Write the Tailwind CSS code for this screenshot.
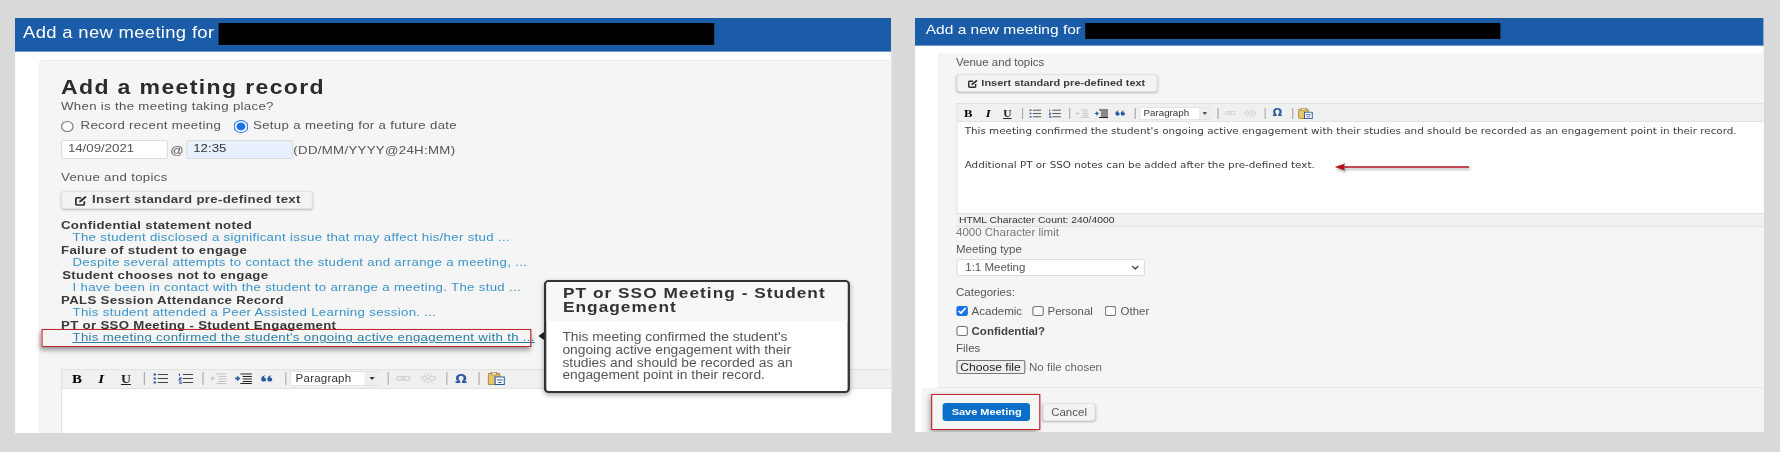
<!DOCTYPE html>
<html lang="en">
<head>
<meta charset="utf-8">
<title>Add a new meeting</title>
<script src="https://cdn.jsdelivr.net/npm/@tailwindcss/browser@4"></script>
</head>
<body class="m-0 bg-[#d9d9d9]">
<div class="w-[1780px] h-[452px] overflow-hidden flex items-start bg-[#d9d9d9] font-['Liberation_Sans',Arial,sans-serif] text-[#444] blur-[0.5px]">

  <!-- LEFT PANEL -->
  <section class="w-[876px] h-[415px] ml-[15px] mt-[18px] shrink-0">
    <div class="relative w-[761.74px] h-[415px] origin-top-left scale-x-[1.15] bg-white overflow-hidden tracking-[0.28px]">
      <header class="h-[34px] bg-[#1a5ca8] border-b border-[#6f9bd0] flex items-center pl-[7px] text-white">
        <h1 class="text-[16px] leading-[18px] tracking-[0.3px] w-[170px] shrink-0 whitespace-nowrap mb-[3px]">Add a new meeting for</h1>
        <div class="w-[430.5px] h-[22px] bg-black mb-[1px]"></div>
      </header>
      <div class="ml-[21px] mt-[8px] h-[373px] bg-[#f5f5f5] border-l border-t border-[#ececec] rounded-tl-[3px] pl-[18px] pt-[14px]">
        <h2 class="h-[24px] leading-[24px] text-[20px] tracking-[1.2px] font-bold text-[#2b2b2b] whitespace-nowrap">Add a meeting record</h2>
        <p class="h-[14px] leading-[14px] text-[11.5px] text-[#555]">When is the meeting taking place?</p>
        <div class="mt-[6px] h-[14px] flex items-center text-[11.5px] text-[#555] whitespace-nowrap">
          <input type="radio" name="when" class="w-[11px] h-[13px] m-0 accent-[#1a73e8]">
          <label class="ml-[6px] w-[133px]">Record recent meeting</label>
          <input type="radio" name="when" checked class="w-[13px] h-[13px] m-0 accent-[#1a73e8]">
          <label class="ml-[4px]">Setup a meeting for a future date</label>
        </div>
        <div class="mt-[7px] h-[19px] flex items-center text-[11.5px] text-[#555] whitespace-nowrap">
          <div class="w-[93px] h-[19px] bg-white border border-[#dcdcdc] rounded-[2px] pl-[5px] leading-[15px] tracking-normal">14/09/2021</div>
          <span class="w-[16px] text-center mt-[3px]">@</span>
          <div class="w-[93px] h-[19px] bg-[#e8f0fe] border border-[#dcdcdc] rounded-[2px] pl-[5px] leading-[15px] text-[#333] tracking-normal">12:35</div>
          <span class="mt-[2px]">(DD/MM/YYYY@24H:MM)</span>
        </div>
        <p class="mt-[11px] h-[14px] leading-[14px] text-[11.5px] text-[#555]">Venue and topics</p>
        <button class="mt-[7px] w-[219px] h-[18px] bg-[#f3f3f3] border border-[#e2e2e2] rounded-[3px] shadow-[0_1px_2px_rgba(0,0,0,0.25)] flex items-center pl-[11px] text-[11.5px] font-bold text-[#3c3c3c] whitespace-nowrap">
          <svg viewBox="0 0 12 12" class="w-[11px] h-[11px] shrink-0 mr-[4px]"><path d="M9 6.8V10a1 1 0 0 1-1 1H2a1 1 0 0 1-1-1V4a1 1 0 0 1 1-1h4" fill="none" stroke="#333" stroke-width="1.7"/><path d="M4 8.2 4.5 6 9.8 1 11.3 2.5 6 7.6z" fill="#333"/></svg>
          Insert standard pre-defined text
        </button>
        <ul class="mt-[9.8px] text-[11.5px] leading-[12.5px] whitespace-nowrap">
          <li class="font-bold text-[#3a3a3a]">Confidential statement noted</li>
          <li class="pl-[10px] text-[#3b94c9]">The student disclosed a significant issue that may affect his/her stud ...</li>
          <li class="font-bold text-[#3a3a3a]">Failure of student to engage</li>
          <li class="pl-[10px] text-[#3b94c9]">Despite several attempts to contact the student and arrange a meeting, ...</li>
          <li class="font-bold text-[#3a3a3a] pl-[1px]">Student chooses not to engage</li>
          <li class="pl-[10px] text-[#3b94c9]">I have been in contact with the student to arrange a meeting. The stud ...</li>
          <li class="font-bold text-[#3a3a3a]">PALS Session Attendance Record</li>
          <li class="pl-[10px] text-[#3b94c9]">This student attended a Peer Assisted Learning session. ...</li>
          <li class="font-bold text-[#3a3a3a]">PT or SSO Meeting - Student Engagement</li>
          <li class="pl-[10px] text-[#2c7ea6] underline">This meeting confirmed the student's ongoing active engagement with th ...</li>
        </ul>
        <div class="mt-[25px] h-[20px] bg-[#f0f0f0] border border-[#e2e2e2] border-r-0 flex items-center pl-[8px] text-[#444] tracking-normal">
          <span class="w-[10px] font-['Liberation_Serif',serif] font-bold text-[13px] text-black text-center">B</span>
          <span class="ml-[12px] w-[8px] font-['Liberation_Serif',serif] font-bold italic text-[13px] text-black text-center">I</span>
          <span class="ml-[13px] w-[9px] font-['Liberation_Serif',serif] font-bold text-[12px] underline text-[#222] text-center">U</span>
          <i class="ml-[11px] w-px h-[13px] bg-[#aaa]"></i>
          <svg viewBox="0 0 13 11" class="ml-[7px] w-[13px] h-[11px]"><path d="M4 1.5h9M4 5.5h9M4 9.5h9" stroke="#444" stroke-width="1"/><path d="M0.5 1.5h2M0.5 5.5h2M0.5 9.5h2" stroke="#2a5a9f" stroke-width="2"/></svg>
          <svg viewBox="0 0 13 11" class="ml-[9px] w-[13px] h-[11px]"><path d="M4 1.5h9M4 5.5h9M4 9.5h9" stroke="#444" stroke-width="1"/><path d="M1 0.5v2.5M0.5 5h2L.5 7h2M.5 9h2v2h-2" stroke="#2a5a9f" stroke-width="1" fill="none"/></svg>
          <i class="ml-[8px] w-px h-[13px] bg-[#aaa]"></i>
          <svg viewBox="0 0 14 11" class="ml-[6px] w-[14px] h-[11px]"><path d="M5 1h9M7 3.5h7M7 6h7M7 8.5h7M5 10.5h9" stroke="#c4c4c4"/><path d="M4 5.5H0M2.5 3.5 0.5 5.5l2 2" stroke="#c4c4c4" fill="none"/></svg>
          <svg viewBox="0 0 15 11" class="ml-[7px] w-[15px] h-[11px]"><path d="M5 1h10M7 3.5h8M7 6h8M7 8.5h8M5 10.5h10" stroke="#222" stroke-width="1.2"/><path d="M0 5.5h4M2 3.5l2 2-2 2" stroke="#2a5a9f" fill="none" stroke-width="1.3"/></svg>
          <svg viewBox="0 0 10 7" class="ml-[8px] w-[10px] h-[7px]"><path d="M0 4.5C0 2 1.5.7 3.8.3 2.8 1.2 2.4 1.8 2.4 2.5c1.2 0 2 .7 2 2S3.4 6.6 2.2 6.6 0 5.9 0 4.5zM5.4 4.5C5.4 2 6.9.7 9.2.3 8.2 1.2 7.8 1.8 7.8 2.5c1.2 0 2 .7 2 2s-1 2.1-2.2 2.1-2.2-.7-2.2-2.1z" fill="#2a5a9f"/></svg>
          <i class="ml-[11px] w-px h-[13px] bg-[#aaa]"></i>
          <div class="ml-[3px] w-[79px] h-[15px] bg-white border border-[#e4e4e4] flex items-center justify-between pl-[4px] text-[10px] tracking-[0.2px] text-[#333]"><span>Paragraph</span><span class="w-[13px] h-[13px] bg-[#eee] flex items-center justify-center"><svg viewBox="0 0 6 4" class="w-[5px] h-[3px]"><path d="M0 0h6L3 4z" fill="#333"/></svg></span></div>
          <i class="ml-[6px] w-px h-[13px] bg-[#aaa]"></i>
          <svg viewBox="0 0 13 5" class="ml-[6px] w-[13px] h-[5px]"><rect x=".7" y=".7" width="7" height="3.6" rx="1.8" fill="none" stroke="#d4d4d4" stroke-width="1.3"/><rect x="5.3" y=".7" width="7" height="3.6" rx="1.8" fill="none" stroke="#d4d4d4" stroke-width="1.3"/></svg>
          <svg viewBox="0 0 13 11" class="ml-[9px] w-[13px] h-[11px]"><rect x=".7" y="3.5" width="5" height="3.6" rx="1.8" fill="none" stroke="#d4d4d4" stroke-width="1.2"/><rect x="7.3" y="3.5" width="5" height="3.6" rx="1.8" fill="none" stroke="#d4d4d4" stroke-width="1.2"/><path d="M6.5 0v3M6.5 8v3M3 1l1.5 2M10 1 8.5 3M3 10l1.5-2M10 10 8.5 8" stroke="#d4d4d4"/></svg>
          <i class="ml-[9px] w-px h-[13px] bg-[#aaa]"></i>
          <span class="ml-[6px] w-[12px] font-['DejaVu_Sans',sans-serif] font-bold text-[12px] leading-[12px] text-[#2a5a9f] text-center">Ω</span>
          <i class="ml-[9px] w-px h-[13px] bg-[#aaa]"></i>
          <svg viewBox="0 0 15 13" class="ml-[7px] w-[15px] h-[13px]"><rect x="0.5" y="1.5" width="10" height="11" rx="1" fill="#e8c66a" stroke="#a8873a"/><rect x="3" y="0.5" width="5" height="2.5" fill="#f5e6b4" stroke="#8a7a50" stroke-width=".6"/><rect x="6.5" y="5" width="8" height="7.5" fill="#fff" stroke="#2a5a9f"/><path d="M8 8h5M9 10.5h3" stroke="#2a5a9f"/></svg>
        </div>
        <div class="h-[45px] bg-white border-l border-[#e2e2e2]"></div>
      </div>

      <!-- Highlight box -->
      <div class="absolute left-[22.6px] top-[311px] w-[426px] h-[18px] border-[1.5px] border-[#c3232b] shadow-[-1px_3px_5px_rgba(0,0,0,0.4)]"></div>

      <!-- Popover -->
      <svg viewBox="0 0 5 8" class="absolute left-[454.5px] top-[314px] w-[5px] h-[8px]"><path d="M5 0v8L0 4z" fill="#222"/></svg>
      <aside class="absolute left-[460px] top-[262px] w-[266px] h-[113px] bg-white border-2 border-[#333] rounded-[4px] shadow-[0_2px_5px_rgba(0,0,0,0.35)] overflow-hidden tracking-normal">
        <h3 class="h-[39px] bg-[#f7f7f7] pl-[14.5px] pt-[4px] text-[15px] tracking-[0.9px] leading-[14px] font-bold text-[#333]">PT or SSO Meeting - Student Engagement</h3>
        <p class="pl-[14px] pr-[10px] pt-[10px] text-[12px] leading-[12.8px] text-[#555]">This meeting confirmed the student's ongoing active engagement with their studies and should be recorded as an engagement point in their record.</p>
      </aside>
    </div>
  </section>

  <!-- RIGHT PANEL -->
  <section class="w-[849px] h-[414px] ml-[24px] mt-[18px] shrink-0">
    <div class="relative w-[738.26px] h-[414px] origin-top-left scale-x-[1.15] bg-white overflow-hidden">
      <header class="h-[28px] bg-[#1a5ca8] border-b border-[#6f9bd0] flex items-start pl-[9.3px] text-white">
        <h1 class="text-[13.5px] leading-[16px] w-[138.5px] shrink-0 whitespace-nowrap mt-[4px]">Add a new meeting for</h1>
        <div class="w-[361px] h-[16px] bg-black mt-[5px]"></div>
      </header>
      <div class="ml-[20px] mt-[7px] h-[335px] bg-[#f5f5f5] border-b border-[#e6e6e6] pl-[15.7px] pt-[3px] text-[10px] text-[#555]">
        <p class="h-[14px] leading-[14px]">Venue and topics</p>
        <button class="mt-[4px] w-[175px] h-[18px] bg-[#f3f3f3] border border-[#e2e2e2] rounded-[3px] shadow-[0_1px_2px_rgba(0,0,0,0.25)] flex items-center pl-[9px] text-[9.5px] font-bold text-[#3c3c3c] whitespace-nowrap">
          <svg viewBox="0 0 12 12" class="w-[9px] h-[9px] shrink-0 mr-[3px]"><path d="M9 6.8V10a1 1 0 0 1-1 1H2a1 1 0 0 1-1-1V4a1 1 0 0 1 1-1h4" fill="none" stroke="#333" stroke-width="1.7"/><path d="M4 8.2 4.5 6 9.8 1 11.3 2.5 6 7.6z" fill="#333"/></svg>
          Insert standard pre-defined text
        </button>
        <div class="mt-[11px] h-[19px] bg-[#f0f0f0] border border-[#e2e2e2] border-r-0 flex items-center pl-[6px] pt-[1px]">
          <span class="w-[7px] font-['Liberation_Serif',serif] font-bold text-[11px] text-black text-center">B</span>
          <span class="ml-[11px] w-[6px] font-['Liberation_Serif',serif] font-bold italic text-[11px] text-black text-center">I</span>
          <span class="ml-[10px] w-[7px] font-['Liberation_Serif',serif] font-bold text-[10px] underline text-[#222] text-center">U</span>
          <i class="ml-[9px] w-px h-[11px] bg-[#aaa]"></i>
          <svg viewBox="0 0 13 11" class="ml-[5px] w-[11px] h-[9px]"><path d="M4 1.5h9M4 5.5h9M4 9.5h9" stroke="#444"/><path d="M0.5 1.5h2M0.5 5.5h2M0.5 9.5h2" stroke="#2a5a9f" stroke-width="2"/></svg>
          <svg viewBox="0 0 13 11" class="ml-[6px] w-[11px] h-[9px]"><path d="M4 1.5h9M4 5.5h9M4 9.5h9" stroke="#444"/><path d="M1 0.5v2.5M0.5 5h2L.5 7h2M.5 9h2v2h-2" stroke="#2a5a9f" fill="none"/></svg>
          <i class="ml-[7px] w-px h-[11px] bg-[#aaa]"></i>
          <svg viewBox="0 0 14 11" class="ml-[5px] w-[11px] h-[9px]"><path d="M5 1h9M7 3.5h7M7 6h7M7 8.5h7M5 10.5h9" stroke="#c4c4c4"/><path d="M4 5.5H0M2.5 3.5 0.5 5.5l2 2" stroke="#c4c4c4" fill="none"/></svg>
          <svg viewBox="0 0 15 11" class="ml-[5.5px] w-[12px] h-[9px]"><path d="M5 1h10M7 3.5h8M7 6h8M7 8.5h8M5 10.5h10" stroke="#222" stroke-width="1.2"/><path d="M0 5.5h4M2 3.5l2 2-2 2" stroke="#2a5a9f" fill="none" stroke-width="1.3"/></svg>
          <svg viewBox="0 0 10 7" class="ml-[5.5px] w-[9px] h-[6px]"><path d="M0 4.5C0 2 1.5.7 3.8.3 2.8 1.2 2.4 1.8 2.4 2.5c1.2 0 2 .7 2 2S3.4 6.6 2.2 6.6 0 5.9 0 4.5zM5.4 4.5C5.4 2 6.9.7 9.2.3 8.2 1.2 7.8 1.8 7.8 2.5c1.2 0 2 .7 2 2s-1 2.1-2.2 2.1-2.2-.7-2.2-2.1z" fill="#2a5a9f"/></svg>
          <i class="ml-[8px] w-px h-[11px] bg-[#aaa]"></i>
          <div class="ml-[3px] w-[63px] h-[13px] bg-white border border-[#e4e4e4] flex items-center justify-between pl-[3px] text-[8.5px] text-[#333]"><span>Paragraph</span><span class="w-[10px] h-[11px] bg-[#eee] flex items-center justify-center"><svg viewBox="0 0 6 4" class="w-[4px] h-[3px]"><path d="M0 0h6L3 4z" fill="#333"/></svg></span></div>
          <i class="ml-[5.5px] w-px h-[11px] bg-[#aaa]"></i>
          <svg viewBox="0 0 13 5" class="ml-[5px] w-[10px] h-[4px]"><rect x=".7" y=".7" width="7" height="3.6" rx="1.8" fill="none" stroke="#d4d4d4" stroke-width="1.3"/><rect x="5.3" y=".7" width="7" height="3.6" rx="1.8" fill="none" stroke="#d4d4d4" stroke-width="1.3"/></svg>
          <svg viewBox="0 0 13 11" class="ml-[7px] w-[11px] h-[9px]"><rect x=".7" y="3.5" width="5" height="3.6" rx="1.8" fill="none" stroke="#d4d4d4" stroke-width="1.2"/><rect x="7.3" y="3.5" width="5" height="3.6" rx="1.8" fill="none" stroke="#d4d4d4" stroke-width="1.2"/><path d="M6.5 0v3M6.5 8v3M3 1l1.5 2M10 1 8.5 3M3 10l1.5-2M10 10 8.5 8" stroke="#d4d4d4"/></svg>
          <i class="ml-[6.5px] w-px h-[11px] bg-[#aaa]"></i>
          <span class="ml-[5px] w-[11px] font-['DejaVu_Sans',sans-serif] font-bold text-[10px] leading-[10px] text-[#2a5a9f] text-center">Ω</span>
          <i class="ml-[7px] w-px h-[11px] bg-[#aaa]"></i>
          <svg viewBox="0 0 15 13" class="ml-[4px] w-[13px] h-[11px]"><rect x="0.5" y="1.5" width="10" height="11" rx="1" fill="#e8c66a" stroke="#a8873a"/><rect x="3" y="0.5" width="5" height="2.5" fill="#f5e6b4" stroke="#8a7a50" stroke-width=".6"/><rect x="6.5" y="5" width="8" height="7.5" fill="#fff" stroke="#2a5a9f"/><path d="M8 8h5M9 10.5h3" stroke="#2a5a9f"/></svg>
        </div>
        <div class="h-[91px] bg-white border-l border-[#e2e2e2] pl-[6.5px] pt-[3px] font-['DejaVu_Sans',sans-serif] text-[9px] leading-[12px] text-[#3a3a3a] whitespace-nowrap">
          <p>This meeting confirmed the student's ongoing active engagement with their studies and should be recorded as an engagement point in their record.</p>
          <p class="mt-[22px]">Additional PT or SSO notes can be added after the pre-defined text.</p>
        </div>
        <div class="h-[14px] bg-[#f0f0f0] border-y border-[#e2e2e2] pl-[2.5px] text-[9px] leading-[12px] text-[#333]">HTML Character Count: 240/4000</div>
        <p class="h-[12px] leading-[12px] text-[#777]">4000 Character limit</p>
        <p class="mt-[4px] h-[14px] leading-[14px]">Meeting type</p>
        <div class="mt-[2px] w-[164px] h-[17px] bg-white border border-[#ddd] rounded-[2px] flex items-center justify-between pl-[7px] pr-[4px] text-[10px] text-[#555]">
          <span>1:1 Meeting</span>
          <svg viewBox="0 0 8 5" class="w-[7px] h-[5px]"><path d="M1 1l3 3 3-3" fill="none" stroke="#333" stroke-width="1.4"/></svg>
        </div>
        <p class="mt-[10px] h-[14px] leading-[14px]">Categories:</p>
        <div class="mt-[4px] h-[14px] flex items-center">
          <input type="checkbox" checked class="w-[10px] h-[12px] m-0 accent-[#1a73e8]">
          <label class="ml-[3.5px] w-[52.5px]">Academic</label>
          <input type="checkbox" class="w-[10px] h-[12px] m-0 accent-[#1a73e8]">
          <label class="ml-[3.5px] w-[49.5px]">Personal</label>
          <input type="checkbox" class="w-[10px] h-[12px] m-0 accent-[#1a73e8]">
          <label class="ml-[4px]">Other</label>
        </div>
        <div class="mt-[6px] h-[14px] flex items-center">
          <input type="checkbox" class="w-[10px] h-[12px] m-0 accent-[#1a73e8]">
          <label class="ml-[3.5px] font-bold text-[#444]">Confidential?</label>
        </div>
        <p class="mt-[4px] h-[14px] leading-[14px]">Files</p>
        <div class="mt-[4px] h-[14px] flex items-center">
          <button class="w-[60px] h-[14px] bg-[#efefef] border border-[#777] rounded-[2px] text-[10.5px] leading-[11px] text-[#222] text-center">Choose file</button>
          <span class="ml-[3.5px] text-[#666]">No file chosen</span>
        </div>
      </div>
      <footer class="ml-[6px] h-[44px] bg-[#f5f5f5] pt-[15px] pl-[18.3px] flex items-start">
        <button class="w-[76px] h-[18px] rounded-[3px] bg-[#0b6fc9] text-white text-[9.5px] font-bold text-center">Save Meeting</button>
        <button class="ml-[10.7px] w-[46px] h-[18px] rounded-[3px] bg-[#f3f3f3] border border-[#e4e4e4] shadow-[0_1px_2px_rgba(0,0,0,0.25)] text-[#555] text-[10px] text-center">Cancel</button>
      </footer>

      <!-- Arrow annotation -->
      <svg viewBox="0 0 117 14" class="absolute left-[365px] top-[143px] w-[117px] h-[14px] drop-shadow-[1px_2px_1px_rgba(0,0,0,0.35)]"><path d="M0 6 9 2.5 8 5.3H117V6.7H8L9 9.5z" fill="#b5121b"/></svg>
      <!-- Save highlight -->
      <div class="absolute left-[13.6px] top-[376px] w-[95px] h-[36px] border-[1.5px] border-[#c3232b] shadow-[-1px_2px_5px_rgba(0,0,0,0.4)]"></div>
    </div>
  </section>
</div>
</body>
</html>
